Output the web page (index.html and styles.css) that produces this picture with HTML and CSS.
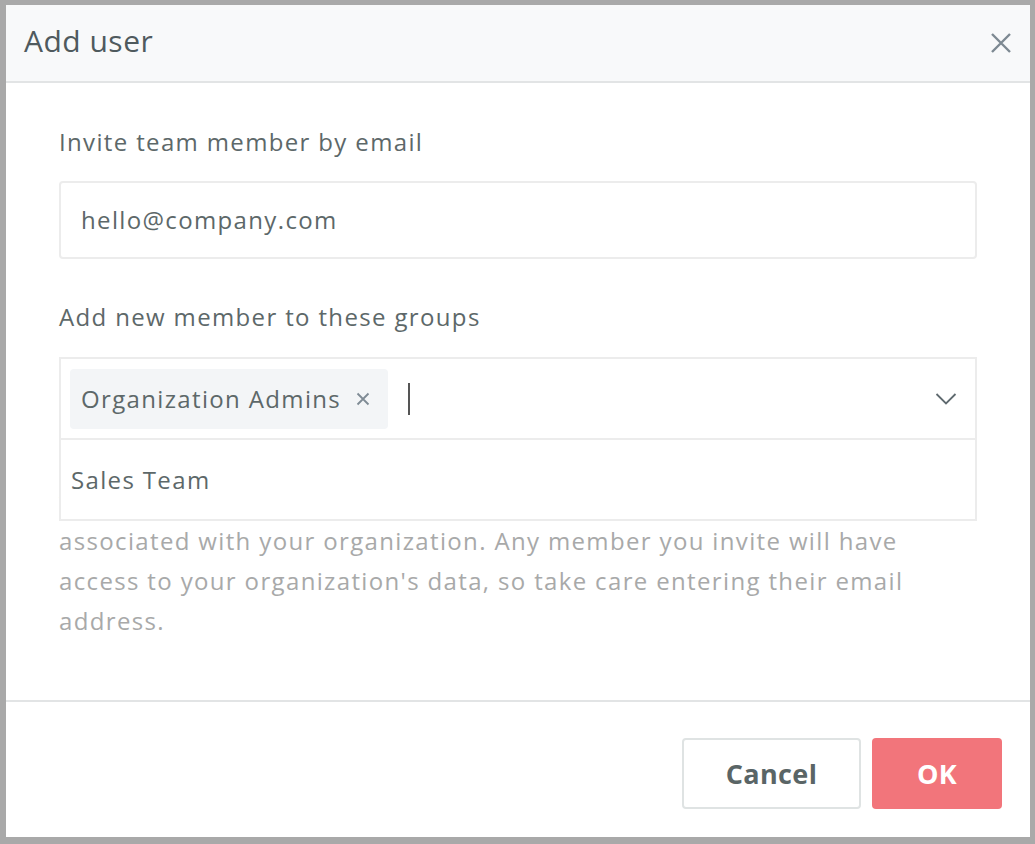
FILE: index.html
```html
<!DOCTYPE html>
<html>
<head>
<meta charset="utf-8">
<link rel="stylesheet" href="styles.css">
</head>
<body>
<div class="dialog">
  <div class="header">
    <h1 class="title">Add user</h1>
    <button class="close" aria-label="Close">
      <svg width="22" height="22" viewBox="0 0 22 22"><path d="M2 2 L20 20 M20 2 L2 20" stroke="#7d8992" stroke-width="2.4" fill="none"/></svg>
    </button>
  </div>
  <div class="content">
    <div class="label">Invite team member by email</div>
    <div class="input">hello@company.com</div>
    <div class="label label2">Add new member to these groups</div>
    <div class="select-wrap">
      <div class="select">
        <span class="tag">Organization Admins<span class="tag-x"><svg width="14" height="14" viewBox="0 0 14 14"><path d="M1.5 1.5 L12.5 12.5 M12.5 1.5 L1.5 12.5" stroke="#7f8b95" stroke-width="1.8" fill="none"/></svg></span></span>
        <span class="cursor"></span>
        <span class="chevron"><svg width="22" height="14" viewBox="0 0 22 14"><path d="M1.5 2 L11 11.5 L20.5 2" stroke="#5f6a6f" stroke-width="1.8" fill="none"/></svg></span>
      </div>
      <div class="menu">
        <div class="option">Sales Team</div>
      </div>
    </div>
    <p class="help">Invited members will receive an email with a link to join this<br>workspace. Only invite people who work with you and are<br>associated with your organization. Any member you invite will have<br>access to your organization's data, so take care entering their email<br>address.</p>
  </div>
  <div class="footer">
    <button class="btn btn-cancel">Cancel</button>
    <button class="btn btn-ok">OK</button>
  </div>
</div>
</body>
</html>
```

FILE: styles.css
```css
* { box-sizing: border-box; }
html, body { height: 100%; }
body {
  margin: 0;
  background: #a9a9a9;
  padding: 5px 5px 7px 6px;
  font-family: "Open Sans", "Noto Sans", sans-serif;
  color: #5d6869;
}
.dialog {
  background: #fff;
  height: 100%;
  display: flex;
  flex-direction: column;
}
.header {
  height: 78px;
  flex: none;
  background: #f8f9fa;
  border-bottom: 2px solid #e2e4e5;
  display: flex;
  align-items: center;
  justify-content: space-between;
  padding: 0 18px 4px 18px;
}
.title {
  margin: 0;
  font-size: 30px;
  line-height: 36px;
  font-weight: 400;
  color: #4f5a5e;
  letter-spacing: 0.5px;
}
.close {
  border: 0;
  background: none;
  padding: 0;
  width: 22px;
  height: 22px;
  display: flex;
  margin-top: 4px;
}
.content {
  flex: 1;
  padding: 43px 53px 0 53px;
}
.label {
  font-size: 24px;
  line-height: 32px;
  letter-spacing: 1.35px;
  color: #5d6869;
}
.label2 { margin-top: 42px; }
.input {
  margin-top: 23px;
  height: 78px;
  border: 2px solid #ececec;
  border-radius: 4px;
  display: flex;
  align-items: center;
  padding-left: 20px;
  font-size: 24px;
  line-height: 32px;
  letter-spacing: 1.35px;
  color: #5d6869;
}
.select-wrap {
  position: relative;
  margin-top: 24px;
}
.select {
  height: 82px;
  border: 2px solid #ececec;
  border-bottom-width: 1px;
  display: flex;
  align-items: center;
  padding: 0 18px 0 9px;
}
.tag {
  height: 60px;
  background: #f3f5f7;
  border-radius: 4px;
  display: flex;
  align-items: center;
  padding: 0 18px 0 11px;
  font-size: 24px;
  letter-spacing: 1.35px;
  color: #5d6869;
}
.tag-x {
  display: flex;
  margin-left: 15px;
}
.cursor {
  width: 2px;
  height: 32px;
  background: #555;
  margin-left: 20px;
}
.chevron {
  margin-left: auto;
  display: flex;
}
.menu {
  position: absolute;
  left: 0;
  right: 0;
  top: 100%;
  height: 82px;
  background: #fff;
  border: 2px solid #ececec;
  border-top: 1px solid #ececec;
  display: flex;
  align-items: center;
  padding-left: 10px;
}
.option {
  font-size: 24px;
  letter-spacing: 1.35px;
  color: #5d6869;
}
.help {
  margin: 2px 0 0 0;
  font-size: 24px;
  line-height: 40px;
  letter-spacing: 1.35px;
  color: #a8a9a9;
}
.footer {
  flex: none;
  height: 137px;
  border-top: 2px solid #e2e4e5;
  display: flex;
  justify-content: flex-end;
  align-items: flex-start;
  gap: 11px;
  padding: 36px 28px 0 0;
}
.btn {
  height: 71px;
  border-radius: 4px;
  font-family: "Open Sans", "Noto Sans", sans-serif;
  font-size: 27px;
  font-weight: 700;
  letter-spacing: 0.4px;
}
.btn-cancel {
  width: 179px;
  background: #fff;
  border: 2px solid #dfe3e3;
  color: #5a6566;
}
.btn-ok {
  width: 130px;
  background: #f2757b;
  border: 0;
  color: #fff;
}
```
